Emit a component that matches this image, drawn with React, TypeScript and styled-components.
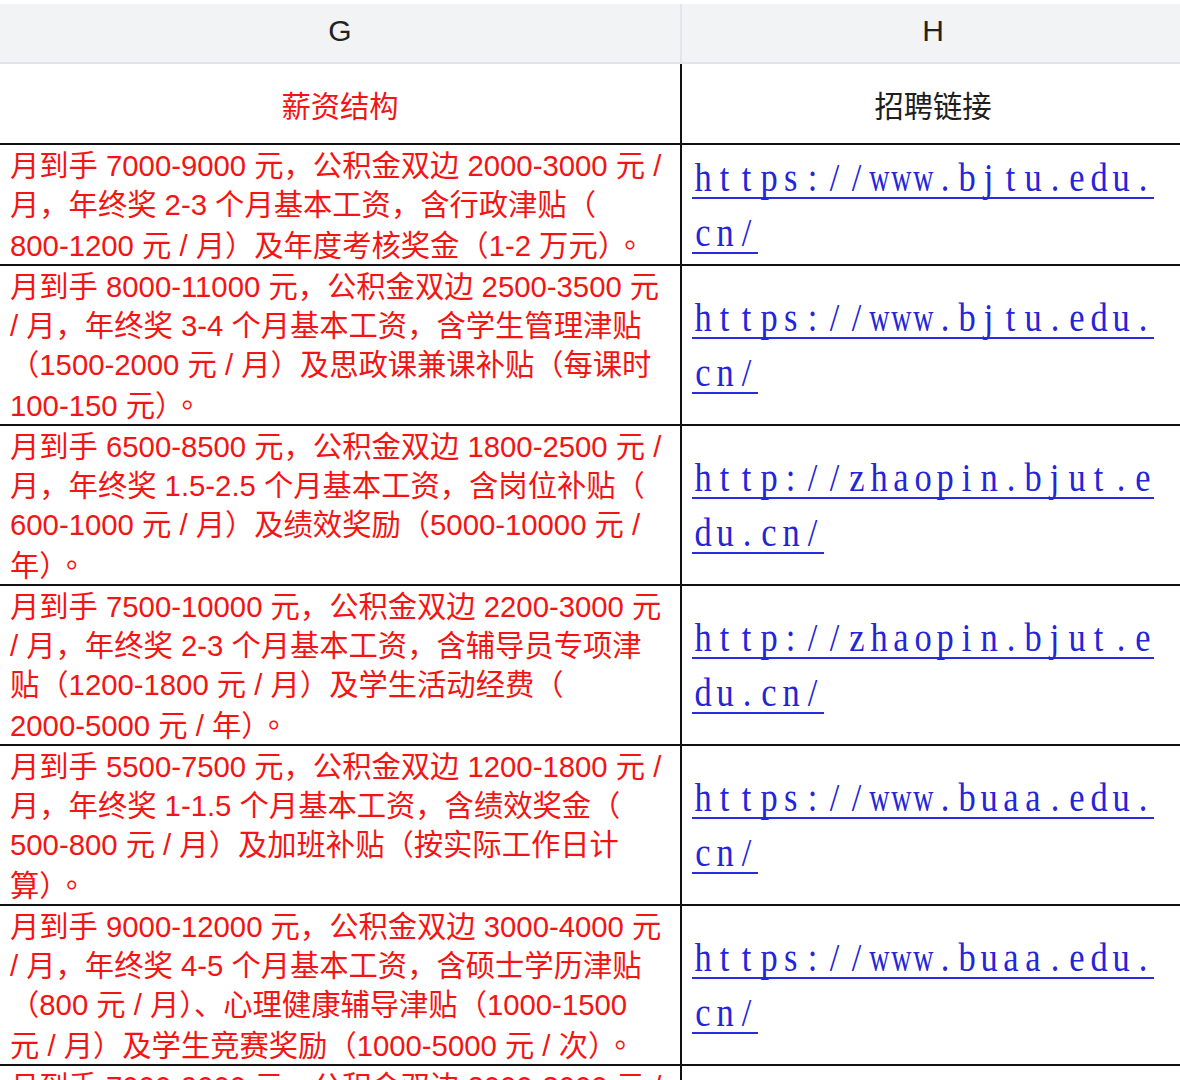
import React from "react";
import styled, { createGlobalStyle } from "styled-components";

const Global = createGlobalStyle`
  html, body {
    margin: 0;
    padding: 0;
    background: #ffffff;
    overflow: hidden;
  }
  body {
    font-family: "Liberation Sans", "Noto Sans CJK SC", sans-serif;
  }
  * { box-sizing: border-box; }
`;

const Page = styled.div`
  width: 1180px;
  padding-top: 4px;
  background: #ffffff;
`;

const ColumnBar = styled.div`
  display: grid;
  grid-template-columns: 680px 1fr;
  height: 60px;
  background: #f2f3f5;
  border-bottom: 2px solid #e3e4e7;
`;

const ColumnLetter = styled.div<{ $divider?: boolean }>`
  display: flex;
  align-items: center;
  justify-content: center;
  font-family: "Liberation Sans", Arial, sans-serif;
  font-size: 30px;
  color: #222;
  border-left: ${(p) => (p.$divider ? "2px solid #e4e5e8" : "none")};
  padding-bottom: 4px;
  padding-left: ${(p) => (p.$divider ? "4px" : "0")};
`;

const Row = styled.div<{ $title?: boolean }>`
  display: grid;
  grid-template-columns: 680px 1fr;
  border-bottom: 2px solid #111;
  min-height: ${(p) => (p.$title ? "81px" : "auto")};
`;

const TitleCell = styled.div<{ $red?: boolean; $divider?: boolean }>`
  display: flex;
  align-items: center;
  justify-content: center;
  font-family: "Liberation Sans", "Noto Sans CJK SC", sans-serif;
  font-size: 29.3px;
  color: ${(p) => (p.$red ? "#f41414" : "#1e1e1e")};
  border-left: ${(p) => (p.$divider ? "2px solid #111" : "none")};
  padding-left: ${(p) => (p.$divider ? "4px" : "0")};
`;

const SalaryCell = styled.div`
  padding: 1px 0 1px 10px;
  color: #f41414;
  font-family: "Liberation Sans", "Noto Sans CJK SC", sans-serif;
  font-size: 29.3px;
`;

const Line = styled.div`
  height: 39px;
  line-height: 39px;
  white-space: pre;
`;

const Period = styled.span`
  font-family: "Noto Sans CJK TC", "Noto Sans CJK SC", sans-serif;
  padding-left: 3px;
`;

const LinkCell = styled.div`
  border-left: 2px solid #111;
  padding: 3px 0 0 10px;
  display: flex;
  align-items: center;
`;

const Link = styled.a`
  display: flex;
  flex-wrap: wrap;
  row-gap: 15px;
  width: 462px;
  text-decoration: none;
  color: #2424d8;
`;

const Glyph = styled.span`
  display: inline-flex;
  justify-content: center;
  width: 22px;
  height: 40px;
  border-bottom: 2.5px solid #2a2ae0;
  overflow: visible;
`;

const Char = styled.span<{ $wide?: boolean }>`
  display: inline-block;
  font-family: "Liberation Serif", "DejaVu Serif", serif;
  font-size: 40px;
  line-height: 38px;
  transform: scaleX(${(p) => (p.$wide ? 0.7 : 0.86)});
  color: #2424d8;
`;

type RowData = { lines: string[]; url: string };

const rows: RowData[] = [
  {
    lines: [
      "月到手 7000-9000 元，公积金双边 2000-3000 元 /",
      "月，年终奖 2-3 个月基本工资，含行政津贴（",
      "800-1200 元 / 月）及年度考核奖金（1-2 万元）。",
    ],
    url: "https://www.bjtu.edu.cn/",
  },
  {
    lines: [
      "月到手 8000-11000 元，公积金双边 2500-3500 元",
      "/ 月，年终奖 3-4 个月基本工资，含学生管理津贴",
      "（1500-2000 元 / 月）及思政课兼课补贴（每课时",
      "100-150 元）。",
    ],
    url: "https://www.bjtu.edu.cn/",
  },
  {
    lines: [
      "月到手 6500-8500 元，公积金双边 1800-2500 元 /",
      "月，年终奖 1.5-2.5 个月基本工资，含岗位补贴（",
      "600-1000 元 / 月）及绩效奖励（5000-10000 元 /",
      "年）。",
    ],
    url: "http://zhaopin.bjut.edu.cn/",
  },
  {
    lines: [
      "月到手 7500-10000 元，公积金双边 2200-3000 元",
      "/ 月，年终奖 2-3 个月基本工资，含辅导员专项津",
      "贴（1200-1800 元 / 月）及学生活动经费（",
      "2000-5000 元 / 年）。",
    ],
    url: "http://zhaopin.bjut.edu.cn/",
  },
  {
    lines: [
      "月到手 5500-7500 元，公积金双边 1200-1800 元 /",
      "月，年终奖 1-1.5 个月基本工资，含绩效奖金（",
      "500-800 元 / 月）及加班补贴（按实际工作日计",
      "算）。",
    ],
    url: "https://www.buaa.edu.cn/",
  },
  {
    lines: [
      "月到手 9000-12000 元，公积金双边 3000-4000 元",
      "/ 月，年终奖 4-5 个月基本工资，含硕士学历津贴",
      "（800 元 / 月）、心理健康辅导津贴（1000-1500",
      "元 / 月）及学生竞赛奖励（1000-5000 元 / 次）。",
    ],
    url: "https://www.buaa.edu.cn/",
  },
  {
    lines: [
      "月到手 7000-9000 元，公积金双边 2000-3000 元 /",
      "月，年终奖 2-3 个月基本工资，含班主任津贴（",
      "500-1000 元 / 月）及年度考核奖金（1-2 万元）。",
    ],
    url: "https://www.buaa.edu.cn/",
  },
];

function SalaryLine({ text }: { text: string }) {
  const parts = text.split("。");
  return (
    <Line>
      {parts.map((p, i) => (
        <React.Fragment key={i}>
          {p}
          {i < parts.length - 1 && <Period>。</Period>}
        </React.Fragment>
      ))}
    </Line>
  );
}

function UrlLink({ url }: { url: string }) {
  return (
    <Link href={url}>
      {Array.from(url).map((ch, i) => (
        <Glyph key={i}>
          <Char $wide={ch === "w" || ch === "m"}>{ch}</Char>
        </Glyph>
      ))}
    </Link>
  );
}

export default function App() {
  return (
    <Page>
      <Global />
      <ColumnBar>
        <ColumnLetter>G</ColumnLetter>
        <ColumnLetter $divider>H</ColumnLetter>
      </ColumnBar>
      <Row $title>
        <TitleCell $red>薪资结构</TitleCell>
        <TitleCell $divider>招聘链接</TitleCell>
      </Row>
      {rows.map((r, i) => (
        <Row key={i}>
          <SalaryCell>
            {r.lines.map((l, j) => (
              <SalaryLine key={j} text={l} />
            ))}
          </SalaryCell>
          <LinkCell>
            <UrlLink url={r.url} />
          </LinkCell>
        </Row>
      ))}
    </Page>
  );
}
